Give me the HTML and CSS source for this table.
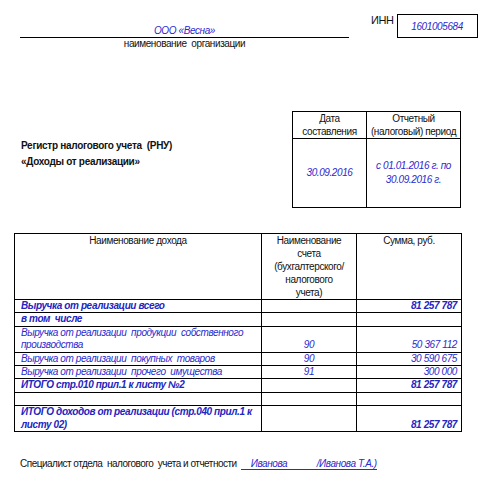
FILE: index.html
```html
<!DOCTYPE html>
<html lang="ru">
<head>
<meta charset="utf-8">
<title>РНУ Доходы от реализации</title>
<link rel="stylesheet" href="styles.css">
</head>
<body>
<div class="page">
  <div class="header">
    <div class="org">
      <div class="org-name">ООО «Весна»</div>
      <div class="org-caption">наименование&nbsp; организации</div>
    </div>
    <div class="inn-label">ИНН</div>
    <div class="inn-box">1601005684</div>
  </div>

  <div class="register">
    <div class="reg-title">
      <div>Регистр налогового учета&nbsp; (РНУ)</div>
      <div>«Доходы от реализации»</div>
    </div>
    <table class="dates">
      <tr class="dates-head">
        <th class="c-date">Дата<br>составления</th>
        <th class="c-period">Отчетный<br>(налоговый) период</th>
      </tr>
      <tr class="dates-body">
        <td>30.09.2016</td>
        <td>с 01.01.2016 г. по<br>30.09.2016 г.</td>
      </tr>
    </table>
  </div>

  <table class="main">
    <tr class="main-head">
      <th class="c1">Наименование дохода</th>
      <th class="c2">Наименование<br>счета<br>(бухгалтерского/<br>налогового<br>учета)</th>
      <th class="c3">Сумма, руб.</th>
    </tr>
    <tr class="b">
      <td>Выручка от реализации всего</td><td></td><td class="num">81 257 787</td>
    </tr>
    <tr class="b">
      <td>в том&nbsp; числе</td><td></td><td></td>
    </tr>
    <tr>
      <td>Выручка от реализации&nbsp; продукции&nbsp; собственного производства</td><td class="acc">90</td><td class="num">50 367 112</td>
    </tr>
    <tr>
      <td>Выручка от реализации&nbsp; покупных&nbsp; товаров</td><td class="acc">90</td><td class="num">30 590 675</td>
    </tr>
    <tr>
      <td>Выручка от реализации&nbsp; прочего&nbsp; имущества</td><td class="acc">91</td><td class="num">300 000</td>
    </tr>
    <tr class="b">
      <td>ИТОГО стр.010 прил.1 к листу №2</td><td></td><td class="num">81 257 787</td>
    </tr>
    <tr class="b">
      <td>&nbsp;</td><td></td><td></td>
    </tr>
    <tr class="b">
      <td>ИТОГО доходов от реализации (стр.040 прил.1 к листу 02)</td><td></td><td class="num">81 257 787</td>
    </tr>
  </table>

  <div class="footer">
    <span class="footer-label">Специалист отдела&nbsp; налогового&nbsp; учета и отчетности</span>
    <span class="sign"><span class="sign-name">Иванова</span><span class="sign-full">/Иванова Т.А.)</span></span>
  </div>
</div>
</body>
</html>
```

FILE: styles.css
```css
html, body {
  margin: 0;
  padding: 0;
  background: #ffffff;
}

body {
  font-family: "Liberation Sans", Arial, sans-serif;
  font-size: 10px;
  letter-spacing: -0.4px;
  color: #111111;
}

.page {
  width: 483px;
}

.header {
  display: flex;
  align-items: flex-start;
  padding-top: 14px;
}

.org {
  width: 329px;
  margin-left: 20px;
}

.org-name {
  padding-top: 10px;
  line-height: 13px;
  text-align: center;
  color: #2a2ad0;
  font-style: italic;
  border-bottom: 1px solid #000000;
}

.org-caption {
  line-height: 12px;
  text-align: center;
}

.inn-label {
  margin-left: 22px;
  font-size: 11px;
  line-height: 10px;
  margin-top: 1px;
}

.inn-box {
  margin-left: 3px;
  width: 79px;
  height: 22px;
  border: 1px solid #000000;
  display: flex;
  align-items: center;
  justify-content: center;
  color: #2a2ad0;
  font-style: italic;
}

.register {
  display: flex;
  align-items: flex-start;
  margin-top: 61px;
}

.reg-title {
  flex: 1;
  margin-left: 21px;
  margin-top: 27px;
  font-weight: bold;
  line-height: 16px;
  letter-spacing: -0.3px;
}

table {
  border-collapse: collapse;
}

.dates {
  width: 169px;
  margin-right: 22px;
  table-layout: fixed;
}

.dates th,
.dates td {
  border: 1px solid #000000;
  padding: 0;
  text-align: center;
  font-weight: normal;
}

.dates th {
  line-height: 13px;
  height: 26px;
}

.c-date {
  width: 73px;
}

.dates td {
  height: 68px;
  vertical-align: middle;
  color: #2a2ad0;
  font-style: italic;
  line-height: 14px;
}

.main {
  margin-left: 14px;
  margin-top: 25px;
  width: 448px;
  table-layout: fixed;
}

.main th,
.main td {
  border: 1px solid #000000;
  padding: 0;
}

.main th {
  font-weight: normal;
  vertical-align: top;
  text-align: center;
  line-height: 13px;
  height: 65px;
}

.c1 { width: 246px; }
.c2 { width: 94px; }

.main td {
  line-height: 12.4px;
  vertical-align: bottom;
  color: #2a2ad0;
  font-style: italic;
}

.main td:first-child {
  padding-left: 6px;
  padding-right: 4px;
}

.main tr.b td {
  font-weight: bold;
  color: #2424c0;
}

.acc {
  text-align: center;
}

.main td.num {
  text-align: right;
  padding-right: 4px;
}

.footer {
  margin-top: 25px;
  margin-left: 20px;
  line-height: 13px;
  display: flex;
  align-items: flex-end;
}

.footer-label {
  letter-spacing: -0.5px;
}

.sign {
  display: inline-flex;
  margin-left: 4px;
  border-bottom: 1px solid #2a2ad0;
  color: #2a2ad0;
  font-style: italic;
  line-height: 11px;
}

.sign-name {
  padding-left: 10px;
  width: 66px;
}
```
